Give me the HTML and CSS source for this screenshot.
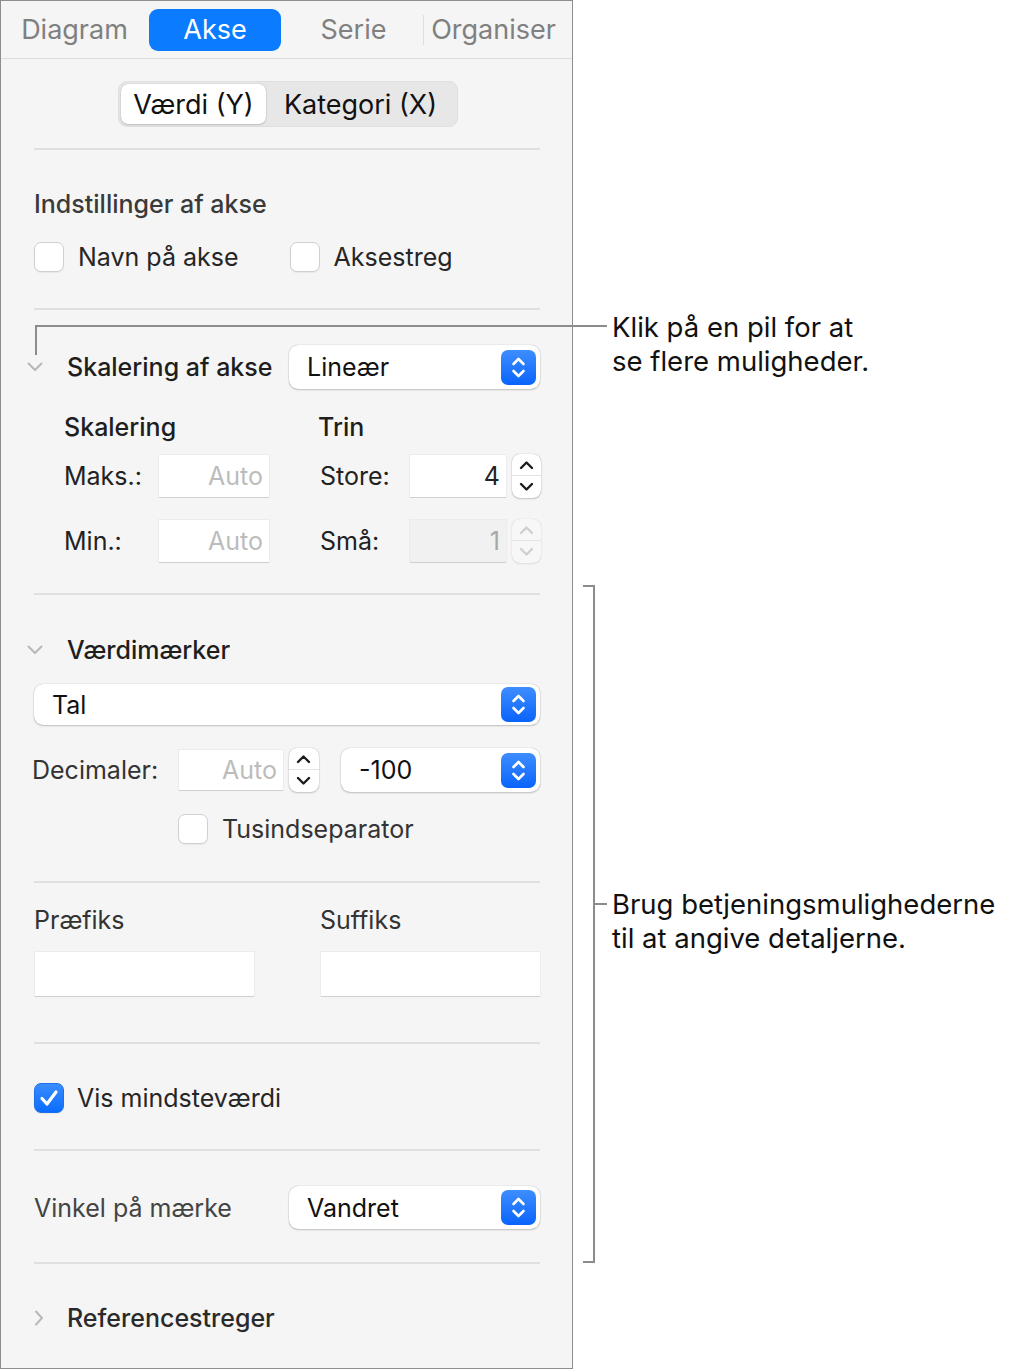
FILE: index.html
```html
<!DOCTYPE html>
<html>
<head>
  <meta charset="utf-8">
  <link rel="stylesheet" href="styles.css">
</head>
<body>
  <div class="page">
    <div class="panel">
      <div class="tabs">
        <span class="tab">Diagram</span>
        <span class="tab active">Akse</span>
        <span class="tab">Serie</span>
        <span class="tab-sep"></span>
        <span class="tab">Organiser</span>
      </div>

      <div class="seg-wrap">
        <div class="segmented">
          <span class="seg on">Værdi (Y)</span>
          <span class="seg">Kategori (X)</span>
        </div>
      </div>

      <div class="sep"></div>

      <!-- axis settings -->
      <div class="sec sec-settings">
        <div class="sec-title">Indstillinger af akse</div>
        <div class="check-row">
          <div class="check"><span class="box"></span>Navn på akse</div>
          <div class="check check-2"><span class="box"></span>Aksestreg</div>
        </div>
      </div>

      <div class="sep"></div>

      <!-- axis scale -->
      <div class="sec sec-scale">
        <div class="disclosure-row">
          <span class="chev down"><svg width="16" height="10" viewBox="0 0 16 10"><path d="M1.5 1.5 L8 8 L14.5 1.5" fill="none" stroke="#b8b8b8" stroke-width="2" stroke-linecap="round" stroke-linejoin="round"/></svg></span>
          <span class="disc-title">Skalering af akse</span>
          <div class="select sel-scale">
            <span class="sel-text">Lineær</span>
            <span class="sel-btn"><svg width="35" height="35" viewBox="0 0 35 35"><path d="M12.5 14 L17.5 9 L22.5 14 M12.5 21 L17.5 26 L22.5 21" fill="none" stroke="#fff" stroke-width="2.6" stroke-linecap="round" stroke-linejoin="round"/></svg></span>
          </div>
        </div>

        <div class="scale-grid">
          <div class="col-head">Skalering</div>
          <div class="col-head col-head-2">Trin</div>

          <div class="field">
            <span class="f-label">Maks.:</span>
            <span class="input in-auto">Auto</span>
          </div>
          <div class="field field-2">
            <span class="f-label f-label-2">Store:</span>
            <span class="input in-step">4</span>
            <span class="stepper"><svg width="29" height="44" viewBox="0 0 29 44"><path d="M9 14 L14.5 8.5 L20 14 M9 30 L14.5 35.5 L20 30" fill="none" stroke="#1c1c1c" stroke-width="2.4" stroke-linecap="round" stroke-linejoin="round"/></svg></span>
          </div>

          <div class="field">
            <span class="f-label">Min.:</span>
            <span class="input in-auto">Auto</span>
          </div>
          <div class="field field-2">
            <span class="f-label f-label-2">Små:</span>
            <span class="input in-step disabled">1</span>
            <span class="stepper off"><svg width="29" height="44" viewBox="0 0 29 44"><path d="M9 14 L14.5 8.5 L20 14 M9 30 L14.5 35.5 L20 30" fill="none" stroke="#cfcfcf" stroke-width="2.4" stroke-linecap="round" stroke-linejoin="round"/></svg></span>
          </div>
        </div>
      </div>

      <div class="sep"></div>

      <!-- value labels -->
      <div class="sec sec-labels">
        <div class="disclosure-row">
          <span class="chev down"><svg width="16" height="10" viewBox="0 0 16 10"><path d="M1.5 1.5 L8 8 L14.5 1.5" fill="none" stroke="#b8b8b8" stroke-width="2" stroke-linecap="round" stroke-linejoin="round"/></svg></span>
          <span class="disc-title">Værdimærker</span>
        </div>

        <div class="select sel-full">
          <span class="sel-text">Tal</span>
          <span class="sel-btn"><svg width="35" height="35" viewBox="0 0 35 35"><path d="M12.5 14 L17.5 9 L22.5 14 M12.5 21 L17.5 26 L22.5 21" fill="none" stroke="#fff" stroke-width="2.6" stroke-linecap="round" stroke-linejoin="round"/></svg></span>
        </div>

        <div class="dec-row">
          <span class="dec-label">Decimaler:</span>
          <span class="input in-dec">Auto</span>
          <span class="stepper st-dec"><svg width="29" height="44" viewBox="0 0 29 44"><path d="M9 14 L14.5 8.5 L20 14 M9 30 L14.5 35.5 L20 30" fill="none" stroke="#1c1c1c" stroke-width="2.4" stroke-linecap="round" stroke-linejoin="round"/></svg></span>
          <div class="select sel-dec">
            <span class="sel-text">-100</span>
            <span class="sel-btn"><svg width="35" height="35" viewBox="0 0 35 35"><path d="M12.5 14 L17.5 9 L22.5 14 M12.5 21 L17.5 26 L22.5 21" fill="none" stroke="#fff" stroke-width="2.6" stroke-linecap="round" stroke-linejoin="round"/></svg></span>
          </div>
        </div>

        <div class="check check-thousand"><span class="box"></span>Tusindseparator</div>
      </div>

      <div class="sep"></div>

      <!-- prefix / suffix -->
      <div class="sec sec-fix">
        <div class="fix-col">
          <div class="fix-label">Præfiks</div>
          <span class="input in-fix"></span>
        </div>
        <div class="fix-col">
          <div class="fix-label">Suffiks</div>
          <span class="input in-fix"></span>
        </div>
      </div>

      <div class="sep"></div>

      <div class="sec sec-min">
        <div class="check">
          <span class="box checked"><svg width="30" height="30" viewBox="0 0 30 30"><path d="M8 15.5 L13 21 L22 9" fill="none" stroke="#fff" stroke-width="3.2" stroke-linecap="round" stroke-linejoin="round"/></svg></span>
          Vis mindsteværdi
        </div>
      </div>

      <div class="sep"></div>

      <div class="sec sec-angle">
        <span class="angle-label">Vinkel på mærke</span>
        <div class="select sel-angle">
          <span class="sel-text">Vandret</span>
          <span class="sel-btn"><svg width="35" height="35" viewBox="0 0 35 35"><path d="M12.5 14 L17.5 9 L22.5 14 M12.5 21 L17.5 26 L22.5 21" fill="none" stroke="#fff" stroke-width="2.6" stroke-linecap="round" stroke-linejoin="round"/></svg></span>
        </div>
      </div>

      <div class="sep"></div>

      <div class="sec sec-ref">
        <div class="disclosure-row">
          <span class="chev right"><svg width="10" height="16" viewBox="0 0 10 16"><path d="M2 1.5 L8 8 L2 14.5" fill="none" stroke="#b8b8b8" stroke-width="2" stroke-linecap="round" stroke-linejoin="round"/></svg></span>
          <span class="disc-title">Referencestreger</span>
        </div>
      </div>
    </div>

    <!-- callouts -->
    <div class="callout-line"></div>
    <div class="callout-leg"></div>
    <div class="note note-top">Klik på en pil for at<br>se flere muligheder.</div>

    <div class="bracket"></div>
    <div class="bracket-tick"></div>
    <div class="note note-mid">Brug betjeningsmulighederne<br>til at angive detaljerne.</div>
  </div>
</body>
</html>
```

FILE: styles.css
```css
* {
  box-sizing: border-box;
}

body {
  margin: 0;
  background: #fff;
  font-family: Inter, "Noto Sans", sans-serif;
  color: #222;
}

.page {
  position: relative;
  width: 1011px;
  height: 1370px;
}

.panel {
  width: 573px;
  height: 1369px;
  background: #f5f5f5;
  border: 1px solid #8e8e8e;
}

/* tabs */
.tabs {
  display: flex;
  align-items: center;
  height: 58px;
  padding-left: 7px;
  border-bottom: 1px solid #dcdcdc;
}

.tab {
  width: 133px;
  height: 42px;
  margin-right: 7px;
  display: flex;
  align-items: center;
  justify-content: center;
  font-size: 27px;
  color: #808080;
  border-radius: 9px;
}

.tab.active {
  width: 132px;
  margin-left: 1px;
  margin-right: 6px;
  background: #0b7bff;
  color: #fff;
}

.tab-sep {
  width: 1px;
  height: 30px;
  background: #dedede;
  margin-left: -4px;
  margin-right: 3px;
}

/* segmented control */
.seg-wrap {
  display: flex;
  justify-content: center;
  padding: 22px 0 21px 3px;
}

.segmented {
  display: flex;
  width: 340px;
  height: 46px;
  padding: 2px;
  background: #e7e7e7;
  border: 1px solid #dfdfdf;
  border-radius: 9px;
}

.seg {
  display: flex;
  align-items: center;
  justify-content: center;
  font-size: 27px;
  color: #111;
  flex: 1;
}

.seg.on {
  flex: 0 0 145px;
  background: #fff;
  border-radius: 7px;
  box-shadow: 0 0 1px rgba(0, 0, 0, 0.3), 0 1px 2px rgba(0, 0, 0, 0.15);
}

.sep {
  height: 2px;
  margin: 0 32px 0 33px;
  background: #e0e0e0;
}

.sec {
  padding: 0 32px 0 33px;
}

/* axis settings */
.sec-settings {
  padding-top: 39px;
  padding-bottom: 36px;
}

.sec-title {
  font-size: 25px;
  line-height: 30px;
  font-weight: 500;
  color: #3a3a3a;
}

.check-row {
  display: flex;
  margin-top: 23px;
}

.check {
  display: flex;
  align-items: center;
  height: 30px;
  font-size: 25px;
  color: #262626;
}

.check-2 {
  margin-left: 51px;
}

.box {
  width: 30px;
  height: 30px;
  margin-right: 14px;
  background: #fff;
  border: 1px solid #d0d0d0;
  border-radius: 7px;
  box-shadow: 0 1px 1px rgba(0, 0, 0, 0.06);
  flex: none;
}

.box.checked {
  background: linear-gradient(#3b8cff, #0a6cff);
  border-color: #1c6fe8;
  margin-right: 13px;
}

.box.checked svg {
  display: block;
  margin: -1px;
}

/* disclosure rows */
.disclosure-row {
  display: flex;
  align-items: center;
}

.chev {
  width: 16px;
  display: flex;
  justify-content: center;
  margin-left: -7px;
  margin-right: 24px;
}

.chev svg {
  display: block;
}

.disc-title {
  font-size: 25px;
  font-weight: 500;
  color: #1e1e1e;
  line-height: 30px;
}

/* popup selects */
.select {
  display: flex;
  align-items: center;
  justify-content: space-between;
  background: #fff;
  border-radius: 9px;
  box-shadow: 0 0 1px rgba(0, 0, 0, 0.35), 0 1px 2px rgba(0, 0, 0, 0.2);
  padding: 0 4px 0 18px;
}

.sel-text {
  font-size: 25px;
  color: #111;
}

.sel-btn {
  width: 35px;
  height: 35px;
  border-radius: 7px;
  background: linear-gradient(#3e8dff, #0a64fb);
}

.sel-btn svg {
  display: block;
}

/* scale */
.sec-scale {
  padding-top: 35px;
  padding-bottom: 30px;
}

.sel-scale {
  width: 251px;
  height: 44px;
  margin-left: auto;
}

.scale-grid {
  display: grid;
  grid-template-columns: 254px 1fr;
  row-gap: 0;
  margin-left: 30px;
  margin-top: 23px;
}

.col-head {
  font-size: 25px;
  font-weight: 500;
  line-height: 30px;
  color: #1e1e1e;
  margin-bottom: 12px;
}

.field {
  display: flex;
  align-items: center;
  height: 44px;
  font-size: 25px;
  color: #222;
}

.field + .field + .field {
  margin-top: 21px;
}

.f-label {
  width: 95px;
}

.f-label-2 {
  width: 92px;
  padding-left: 2px;
}

.input {
  display: flex;
  align-items: center;
  justify-content: flex-end;
  height: 42px;
  padding-right: 6px;
  background: #fff;
  box-shadow: 0 1px 0 #cfcfcf, 0 0 0 1px #ececec;
  font-size: 25px;
  color: #222;
}

.in-auto {
  width: 110px;
  color: #bcbcbc;
}

.in-step {
  width: 96px;
}

.in-step.disabled {
  background: #f1f1f1;
  color: #a8a8a8;
}

.stepper {
  width: 29px;
  height: 44px;
  margin-left: 6px;
  background: #fff;
  border-radius: 8px;
  box-shadow: 0 0 1px rgba(0, 0, 0, 0.35), 0 1px 2px rgba(0, 0, 0, 0.18);
  position: relative;
}

.stepper::after {
  content: "";
  position: absolute;
  left: 0;
  right: 0;
  top: 21px;
  height: 1px;
  background: #e4e4e4;
}

.stepper svg {
  display: block;
}

.stepper.off {
  background: #f7f7f7;
  box-shadow: 0 0 1px rgba(0, 0, 0, 0.2), 0 1px 2px rgba(0, 0, 0, 0.08);
}

/* value labels */
.sec-labels {
  padding-top: 40px;
  padding-bottom: 37px;
}

.sel-full {
  height: 41px;
  margin-top: 19px;
}

.dec-row {
  display: flex;
  align-items: center;
  margin-top: 23px;
  height: 44px;
}

.dec-label {
  width: 147px;
  margin-left: -2px;
  font-size: 25px;
  color: #333;
}

.in-dec {
  width: 104px;
  height: 40px;
  color: #bcbcbc;
}

.st-dec {
  width: 30px;
}

.sel-dec {
  width: 199px;
  height: 44px;
  margin-left: 22px;
}

.check-thousand {
  margin-top: 22px;
  margin-left: 144px;
  color: #333;
}

/* prefix / suffix */
.sec-fix {
  display: grid;
  grid-template-columns: 286px 1fr;
  padding-top: 22px;
  padding-bottom: 46px;
}

.fix-label {
  font-size: 25px;
  line-height: 30px;
  color: #333;
}

.in-fix {
  width: 219px;
  height: 44px;
  margin-top: 17px;
  margin-left: 1px;
}

/* minimum */
.sec-min {
  padding-top: 39px;
  padding-bottom: 36px;
}

.sec-min .check {
  color: #262626;
}

/* angle */
.sec-angle {
  display: flex;
  align-items: center;
  padding-top: 35px;
  padding-bottom: 33px;
}

.angle-label {
  font-size: 25px;
  color: #444;
}

.sel-angle {
  width: 251px;
  height: 43px;
  margin-left: auto;
}

/* reference lines */
.sec-ref {
  padding-top: 39px;
}

.chev.right {
  margin-left: -3px;
  margin-right: 20px;
}

.sec-ref .disc-title {
  color: #2a2a2a;
}

/* callouts */
.callout-line {
  position: absolute;
  left: 35px;
  top: 325px;
  width: 572px;
  height: 2px;
  background: #8c8c8c;
}

.callout-leg {
  position: absolute;
  left: 35px;
  top: 325px;
  width: 2px;
  height: 30px;
  background: #8c8c8c;
}

.bracket {
  position: absolute;
  left: 583px;
  top: 585px;
  width: 12px;
  height: 678px;
  border: 2px solid #8c8c8c;
  border-left: none;
}

.bracket-tick {
  position: absolute;
  left: 595px;
  top: 903px;
  width: 12px;
  height: 2px;
  background: #8c8c8c;
}

.note {
  position: absolute;
  left: 612px;
  font-size: 27.5px;
  line-height: 34px;
  color: #111;
}

.note-top {
  top: 310px;
}

.note-mid {
  top: 887px;
}
```
